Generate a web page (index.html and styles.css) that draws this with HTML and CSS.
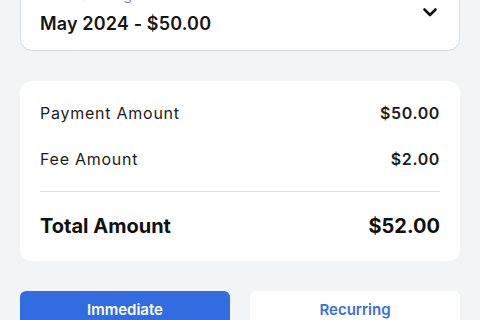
FILE: index.html
```html
<!DOCTYPE html>
<html lang="en">
<head>
<meta charset="utf-8">
<link rel="stylesheet" href="styles.css">
</head>
<body>
<div class="page">
  <div class="select">
    <div class="select-text">
      <div class="select-label">Outstanding</div>
      <div class="select-value">May 2024 - $50.00</div>
    </div>
    <svg class="chevron" width="24" height="24" viewBox="0 0 24 24"><path d="M6.5 9.5l5.5 5.5 5.5-5.5" fill="none" stroke="#111" stroke-width="2.6" stroke-linecap="round" stroke-linejoin="round"/></svg>
  </div>
  <div class="summary">
    <div class="row"><span>Payment Amount</span><span class="amt">$50.00</span></div>
    <div class="row row-second"><span>Fee Amount</span><span class="amt">$2.00</span></div>
    <div class="divider"></div>
    <div class="row total"><span>Total Amount</span><span>$52.00</span></div>
  </div>
  <div class="buttons">
    <button class="btn btn-primary">Immediate</button>
    <button class="btn btn-secondary">Recurring</button>
  </div>
</div>
</body>
</html>
```
FILE: styles.css
```css
html, body {
  margin: 0;
  padding: 0;
  background: #f3f4f6;
  font-family: Inter, "Noto Sans", sans-serif;
  color: #161616;
  overflow: hidden;
}
.page {
  margin-top: -28px;
  padding: 0 20px;
  display: flex;
  flex-direction: column;
}
.select {
  background: #fff;
  border: 1px solid #cfdee4;
  border-radius: 12px;
  padding: 12px 17px 12px 19px;
  display: flex;
  align-items: center;
  justify-content: space-between;
}
.select-text {
  display: flex;
  flex-direction: column;
  gap: 5px;
}
.select-label {
  font-size: 15px;
  line-height: 20px;
  letter-spacing: 0.6px;
  color: #8a96ab;
}
.select-value {
  font-size: 18px;
  line-height: 28px;
  font-weight: 600;
  letter-spacing: 0.15px;
  color: #161616;
}
.chevron {
  display: block;
}
.summary {
  margin-top: 30px;
  background: #fff;
  border-radius: 12px;
  padding: 20px 20px 21px;
  display: flex;
  flex-direction: column;
}
.row {
  display: flex;
  justify-content: space-between;
  font-size: 16px;
  line-height: 24px;
  letter-spacing: 0.75px;
  color: #1c1c1c;
}
.amt {
  font-weight: 600;
  letter-spacing: 0.6px;
}
.row-second {
  margin-top: 22px;
}
.divider {
  height: 1px;
  background: #d4e2e7;
  margin: 20px 0 20px;
}
.total {
  font-size: 20px;
  line-height: 28px;
  font-weight: 700;
  letter-spacing: 0;
  color: #111;
}
.buttons {
  margin-top: 30px;
  display: grid;
  grid-template-columns: 1fr 1fr;
  gap: 20px;
}
.btn {
  font-family: Inter, "Noto Sans", sans-serif;
  font-size: 15px;
  line-height: 24px;
  font-weight: 600;
  padding: 7px 0 9px;
  border: none;
  border-radius: 6px;
  margin: 0;
}
.btn-primary {
  background: #316ce1;
  color: #fff;
}
.btn-secondary {
  background: #fff;
  color: #3a6fe0;
}
```
